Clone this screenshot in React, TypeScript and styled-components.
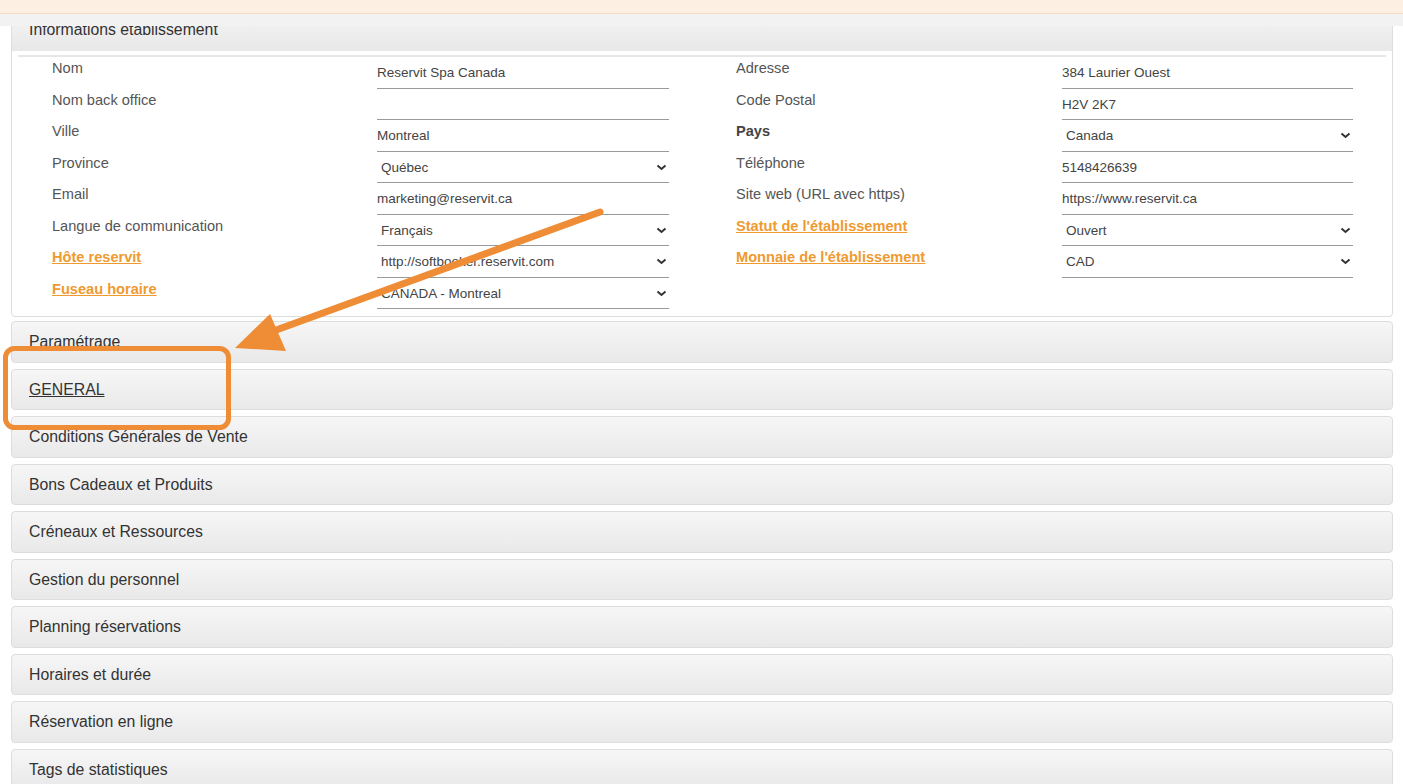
import React, { Fragment } from 'react';
import styled, { createGlobalStyle, css } from 'styled-components';

const GlobalStyle = createGlobalStyle`
	html, body {
		margin: 0;
		padding: 0;
		background: #ffffff;
		font-family: "Liberation Sans", Arial, sans-serif;
		color: #555;
	}
	* {
		box-sizing: border-box;
	}
`;

const Banner = styled.div`
	position: fixed;
	top: 0;
	left: 0;
	right: 0;
	z-index: 5;
`;

const BannerStripe = styled.div`
	height: 14px;
	background: #fdf0e2;
	border-bottom: 1px solid #f2dcc4;
`;

const BannerFade = styled.div`
	height: 12px;
	background: #f2f2f2;
`;

const Page = styled.div`
	position: relative;
	padding: 8px 10px 0 11px;
	height: 784px;
	overflow: hidden;
`;

const Panel = styled.section`
	border: 1px solid #dddddd;
	border-radius: 4px;
	background: #ffffff;
`;

const PanelHeader = styled.div`
	height: 42px;
	padding: 11px 0 0 17px;
	font-size: 15.8px;
	line-height: 19px;
	color: #333;
	background: linear-gradient(#f5f5f5, #e8e8e8);
	border-radius: 3px 3px 0 0;
`;

const PanelBody = styled.div`
	padding: 4px 6px 7px 6px;
`;

const Form = styled.div`
	display: flex;
	border-top: 2px solid #e6e6e6;
	padding-left: 34px;
`;

const Half = styled.div<{ $right?: boolean }>`
	display: grid;
	grid-template-columns: 325px 292px;
	grid-auto-rows: 31.5px;
	${(p) =>
		p.$right &&
		css`
			margin-left: 67px;
			grid-template-columns: 326px 291px;
		`}
`;

const Label = styled.div<{ $kind?: 'bold' | 'link' }>`
	padding-top: 2px;
	font-size: 14.6px;
	line-height: 18px;
	color: #555;
	${(p) =>
		p.$kind === 'bold' &&
		css`
			font-weight: bold;
			color: #444;
		`}
	${(p) =>
		p.$kind === 'link' &&
		css`
			font-weight: bold;
			color: #ef9a30;
			text-decoration: underline;
		`}
`;

const Field = styled.div<{ $select?: boolean }>`
	position: relative;
	padding: 8px 0 0 ${(p) => (p.$select ? '4px' : '0')};
	font-size: 13.5px;
	line-height: 16px;
	color: #444;
	border-bottom: 1px solid #9a9a9a;
	white-space: nowrap;
`;

const Chevron = styled.svg`
	position: absolute;
	right: 2px;
	top: 12px;
`;

const Accordion = styled.div`
	display: flex;
	flex-direction: column;
	gap: 6px;
	margin-top: 4px;
`;

const AccordionItem = styled.div<{ $active?: boolean }>`
	height: 41.5px;
	padding: 10px 0 0 17px;
	font-size: 15.8px;
	line-height: 19px;
	color: #333;
	border: 1px solid #dddddd;
	border-radius: 4px;
	background: linear-gradient(#f6f6f6, #e9e9e9);
	${(p) =>
		p.$active &&
		css`
			text-decoration: underline;
		`}
`;

const Annotation = styled.svg`
	position: absolute;
	left: 0;
	top: 0;
	pointer-events: none;
`;

type Row = { label: string; kind?: 'bold' | 'link'; value: string; select?: boolean };

const leftRows: Row[] = [
	{ label: 'Nom', value: 'Reservit Spa Canada' },
	{ label: 'Nom back office', value: '' },
	{ label: 'Ville', value: 'Montreal' },
	{ label: 'Province', value: 'Québec', select: true },
	{ label: 'Email', value: 'marketing@reservit.ca' },
	{ label: 'Langue de communication', value: 'Français', select: true },
	{ label: 'Hôte reservit', kind: 'link', value: 'http://softbooker.reservit.com', select: true },
	{ label: 'Fuseau horaire', kind: 'link', value: 'CANADA - Montreal', select: true },
];

const rightRows: Row[] = [
	{ label: 'Adresse', value: '384 Laurier Ouest' },
	{ label: 'Code Postal', value: 'H2V 2K7' },
	{ label: 'Pays', kind: 'bold', value: 'Canada', select: true },
	{ label: 'Téléphone', value: '5148426639' },
	{ label: 'Site web (URL avec https)', value: 'https://www.reservit.ca' },
	{ label: "Statut de l'établissement", kind: 'link', value: 'Ouvert', select: true },
	{ label: "Monnaie de l'établissement", kind: 'link', value: 'CAD', select: true },
];

const sections = [
	'Paramétrage',
	'GENERAL',
	'Conditions Générales de Vente',
	'Bons Cadeaux et Produits',
	'Créneaux et Ressources',
	'Gestion du personnel',
	'Planning réservations',
	'Horaires et durée',
	'Réservation en ligne',
	'Tags de statistiques',
];

function Rows({ rows }: { rows: Row[] }) {
	return (
		<Fragment>
			{rows.map((r) => (
				<Fragment key={r.label}>
					<Label $kind={r.kind}>{r.label}</Label>
					<Field $select={r.select}>
						{r.value}
						{r.select && (
							<Chevron width="11" height="7" viewBox="0 0 11 7">
								<polyline points="1.5,1.5 5.5,5 9.5,1.5" fill="none" stroke="#333" strokeWidth="2" />
							</Chevron>
						)}
					</Field>
				</Fragment>
			))}
		</Fragment>
	);
}

export default function App() {
	return (
		<Fragment>
			<GlobalStyle />
			<Banner>
				<BannerStripe />
				<BannerFade />
			</Banner>
			<Page>
				<Panel>
					<PanelHeader>Informations établissement</PanelHeader>
					<PanelBody>
						<Form>
							<Half>
								<Rows rows={leftRows} />
							</Half>
							<Half $right>
								<Rows rows={rightRows} />
							</Half>
						</Form>
					</PanelBody>
				</Panel>
				<Accordion>
					{sections.map((s) => (
						<AccordionItem key={s} $active={s === 'GENERAL'}>
							{s}
						</AccordionItem>
					))}
				</Accordion>
				<Annotation width="1403" height="784" viewBox="0 0 1403 784">
					<line x1="600" y1="212" x2="268" y2="333" stroke="#ef8c36" strokeWidth="7" strokeLinecap="round" />
					<polygon points="235,348 270,314 286,351" fill="#ef8c36" />
					<rect x="5.5" y="348.5" width="223" height="79" rx="9" fill="none" stroke="#ef8c36" strokeWidth="5" />
				</Annotation>
			</Page>
		</Fragment>
	);
}
